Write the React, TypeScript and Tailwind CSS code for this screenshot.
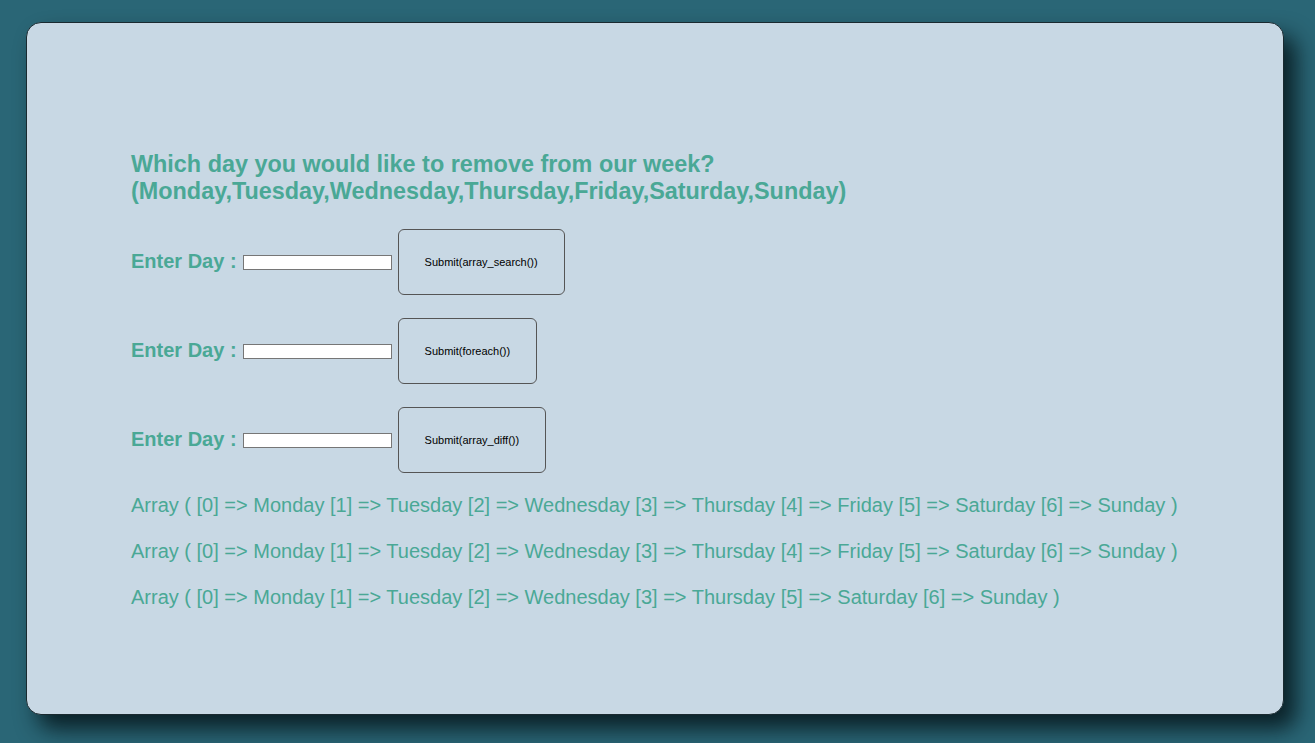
const rows = ["Submit(array_search())", "Submit(foreach())", "Submit(array_diff())"];

const results = [
  "Array ( [0] => Monday [1] => Tuesday [2] => Wednesday [3] => Thursday [4] => Friday [5] => Saturday [6] => Sunday )",
  "Array ( [0] => Monday [1] => Tuesday [2] => Wednesday [3] => Thursday [4] => Friday [5] => Saturday [6] => Sunday )",
  "Array ( [0] => Monday [1] => Tuesday [2] => Wednesday [3] => Thursday [5] => Saturday [6] => Sunday )",
];

export default function App() {
  return (
    <div className="h-[743px] w-[1315px] bg-[#2a6676] pl-[26px] pt-[22px] font-['Liberation_Sans',Arial,sans-serif]">
      <div className="h-[693px] w-[1258px] rounded-[15px] border border-[#1a2a30] bg-[#c8d8e4] pl-[104px] pt-[128px] shadow-[12px_14px_22px_rgba(5,20,25,0.85)]">
        <h2 className="text-[23.4px] font-bold leading-[27px] text-[#4aa896]">
          Which day you would like to remove from our week?
          <br />
          (Monday,Tuesday,Wednesday,Thursday,Friday,Saturday,Sunday)
        </h2>

        <div className="mt-[24px] flex flex-col gap-[23px]">
          {rows.map((label) => (
            <div key={label} className="flex items-center">
              <span className="-mt-[2px] text-[20px] font-bold text-[#4aa896]">Enter Day :</span>
              <input
                type="text"
                className="ml-[6px] h-[15px] w-[149px] border border-[#767676] bg-white"
              />
              <button className="ml-[6px] h-[66px] rounded-[6px] border border-[#555] px-[26px] text-[11px] text-black">
                {label}
              </button>
            </div>
          ))}
        </div>

        <div className="mt-[21px] flex flex-col gap-[23px]">
          {results.map((line, i) => (
            <p key={i} className="text-[20px] leading-[23px] text-[#4aa896]">
              {line}
            </p>
          ))}
        </div>
      </div>
    </div>
  );
}
